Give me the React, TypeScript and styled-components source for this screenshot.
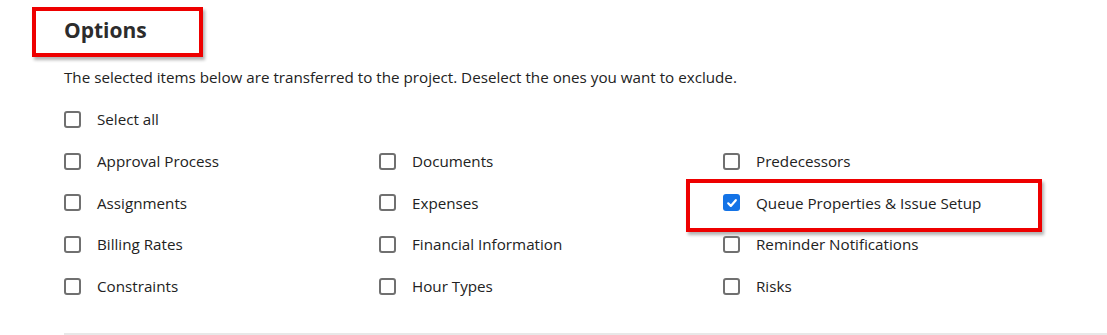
import styled, { createGlobalStyle } from "styled-components";

const GlobalStyle = createGlobalStyle`
  body {
    margin: 0;
    background: #ffffff;
    font-family: "Open Sans", "Liberation Sans", sans-serif;
    color: #222222;
  }
`;

const columns: { label: string; checked?: boolean; marked?: boolean }[][] = [
  [
    { label: "Approval Process" },
    { label: "Assignments" },
    { label: "Billing Rates" },
    { label: "Constraints" },
  ],
  [
    { label: "Documents" },
    { label: "Expenses" },
    { label: "Financial Information" },
    { label: "Hour Types" },
  ],
  [
    { label: "Predecessors" },
    { label: "Queue Properties & Issue Setup", checked: true, marked: true },
    { label: "Reminder Notifications" },
    { label: "Risks" },
  ],
];

function Checkbox({ checked }: { checked?: boolean }) {
  return (
    <Box checked={checked}>
      {checked && (
        <svg width="12" height="12" viewBox="0 0 12 12">
          <path
            d="M2.2 6.3 L4.8 8.9 L9.8 3.2"
            fill="none"
            stroke="#ffffff"
            strokeWidth="2.2"
            strokeLinecap="round"
            strokeLinejoin="round"
          />
        </svg>
      )}
    </Box>
  );
}

export default function App() {
  const rows = [0, 1, 2, 3];
  return (
    <Page>
      <GlobalStyle />
      <TitleFrame>
        <Title>Options</Title>
      </TitleFrame>
      <Description>
        The selected items below are transferred to the project. Deselect the
        ones you want to exclude.
      </Description>
      <SelectAll>
        <Checkbox />
        <Label>Select all</Label>
      </SelectAll>
      <Grid>
        {rows.map((r) =>
          columns.map((col, c) => (
            <Option key={`${r}-${c}`} marked={col[r].marked}>
              <Checkbox checked={col[r].checked} />
              <Label>{col[r].label}</Label>
            </Option>
          ))
        )}
      </Grid>
      <Divider />
    </Page>
  );
}

const Page = styled.div`
  width: 1107px;
  height: 335px;
  overflow: hidden;
  position: relative;
`;

const TitleFrame = styled.div`
  box-sizing: border-box;
  margin: 7px 0 0 32px;
  width: 171px;
  height: 50px;
  border: 4px solid #ee0000;
  box-shadow: 2px 3px 3px rgba(0, 0, 0, 0.3);
  padding: 5px 0 0 28px;
`;

const Title = styled.h2`
  margin: 0;
  font-size: 21px;
  font-weight: 700;
  line-height: 28px;
  color: #2c2c2c;
`;

const Description = styled.p`
  margin: 9px 0 0 64px;
  font-size: 15.2px;
  line-height: 22px;
`;

const SelectAll = styled.div`
  display: flex;
  align-items: center;
  height: 24px;
  margin: 19px 0 0 64px;
`;

const Grid = styled.div`
  display: grid;
  grid-template-columns: 315px 344px 1fr;
  grid-auto-rows: 24px;
  row-gap: 17.7px;
  margin: 18px 0 0 64px;
`;

const Option = styled.div<{ marked?: boolean }>`
  display: flex;
  align-items: center;
  position: relative;

  ${(p) =>
    p.marked &&
    `
    &::after {
      content: "";
      position: absolute;
      left: -37px;
      top: -12px;
      width: 356px;
      height: 53px;
      box-sizing: border-box;
      border: 4px solid #ee0000;
      box-shadow: 2px 3px 3px rgba(0, 0, 0, 0.3);
      pointer-events: none;
    }
  `}
`;

const Box = styled.span<{ checked?: boolean }>`
  box-sizing: border-box;
  width: 17px;
  height: 17px;
  flex-shrink: 0;
  border-radius: 3px;
  border: ${(p) => (p.checked ? "none" : "2px solid #707070")};
  background: ${(p) => (p.checked ? "#1473e6" : "#ffffff")};
  display: flex;
  align-items: center;
  justify-content: center;
`;

const Label = styled.span`
  margin-left: 16px;
  font-size: 15.2px;
  color: #222222;
  white-space: nowrap;
`;

const Divider = styled.div`
  position: absolute;
  left: 64px;
  right: 0;
  bottom: 0;
  height: 2px;
  background: #e8e8e8;
`;
